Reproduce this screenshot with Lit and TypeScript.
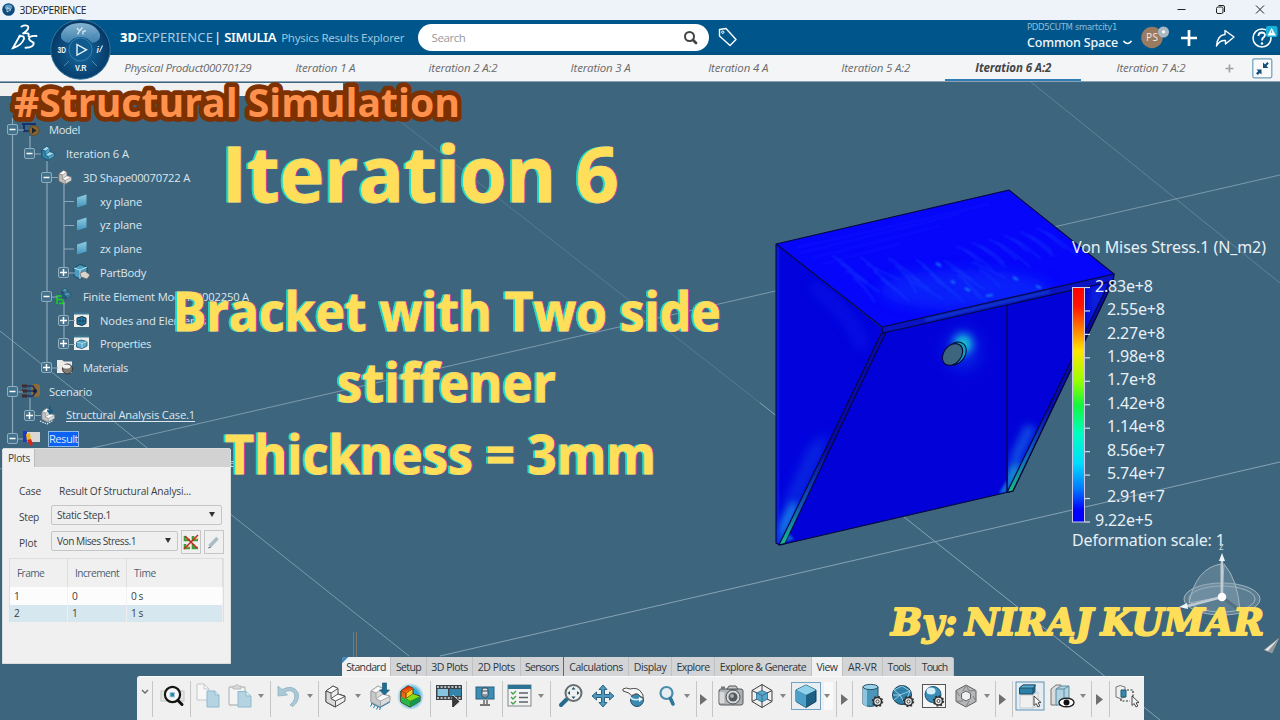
import { LitElement, html, svg, css, nothing } from "lit";
import { customElement, property } from "lit/decorators.js";
import { classMap } from "lit/directives/class-map.js";
import { styleMap } from "lit/directives/style-map.js";

/* Single-line label that tracks its letters so that it fills a given width. */
@customElement("fit-text")
class FitText extends LitElement {
  @property({ type: Number }) w = 0;
  @property() text = "";
  static styles = css`
    :host { display: inline-block; white-space: pre; flex: none; }
  `;
  render() {
    return html`<span>${this.text}</span>`;
  }
  updated() {
    const span = this.renderRoot.querySelector("span") as HTMLElement;
    span.style.letterSpacing = "0px";
    const natural = span.getBoundingClientRect().width;
    span.style.letterSpacing = (this.w - natural) / this.text.length + "px";
  }
}

const fit = (text: string, w: number) => html`<fit-text .text=${text} .w=${w}></fit-text>`;

const part = (a: string, b: string, c: string, line: string) => svg`
  <path d="M3 8 L10 3 L15 5.500 L15 11 L22 13 L22 18 L12 24 L3 19Z" fill=${b} stroke=${line} stroke-width="1"/>
  <path d="M3 8 L10 3 L15 5.500 L8 10Z" fill=${a} stroke=${line} stroke-width=".9"/>
  <path d="M8 10 L8 15.500 L12.500 18 L12.500 24 L3 19 L3 8Z" fill=${c} stroke=${line} stroke-width=".9"/>
  <path d="M8 15.500 L15 11 L22 13.500 L12.500 18Z" fill=${a} stroke=${line} stroke-width=".9"/>`;
const gear = (x: number, y: number) => svg`
  <circle cx=${x} cy=${y} r="4" fill="#e8e8e8" stroke="#333" stroke-width="1.600"/>
  <circle cx=${x} cy=${y} r="5" fill="none" stroke="#333" stroke-width="1.500" stroke-dasharray="1.900 2"/>
  <circle cx=${x} cy=${y} r="1.500" fill="#fff" stroke="#333" stroke-width=".9"/>`;
const pointer = (x: number, y: number) => svg`
  <path transform="translate(${x} ${y})" d="M0 0 L0 9.500 L2.200 7.500 L4 11 L5.800 10 L4.200 6.800 L7 6.500Z" fill="#f4f4f4" stroke="#333" stroke-width=".9"/>`;

const icons: Record<string, unknown> = {
  chevron: svg`<path d="M10 7 L13 10 L16 7" fill="none" stroke="#666" stroke-width="1.300"/>`,
  search: svg`<rect x="1" y="8" width="23" height="10" fill="#e4e4e4" stroke="#c4c4c4"/>
    <circle cx="12.500" cy="11.500" r="7.600" fill="#f8f8f8" stroke="#161616" stroke-width="2.200"/>
    <rect x="10" y="9.500" width="4.500" height="4.500" fill="#2f84ad" stroke="#a7cfe0"/><path d="M18 17.500 L22 21.500" stroke="#111" stroke-width="3" stroke-linecap="round"/>`,
  copy: svg`<path d="M2 1 H9 L14 6 V17 H2Z" fill="#f7f7f7" stroke="#c3c8cb"/><path d="M9 1 V6 H14" fill="none" stroke="#c3c8cb"/>
    <path d="M12 8 H20 L24 12 V24 H12Z" fill="#b5d4e2" stroke="#8fb9cc"/><path d="M20 8 V12 H24" fill="#dcecf3" stroke="#8fb9cc"/>`,
  paste: svg`<rect x="2" y="4" width="16" height="18" rx="1" fill="#f4f4f4" stroke="#b9bdbf" stroke-width="1.300"/><path d="M6 6 V3 H8 Q10 0 12 3 H14 V6Z" fill="#d8d8d8" stroke="#b9bdbf"/>
    <path d="M11 8.500 H19 L24 13 V24 H11Z" fill="#b5d4e2" stroke="#8fb9cc"/><path d="M19 8.500 V13 H24" fill="#dcecf3" stroke="#8fb9cc"/>`,
  undo: svg`<path d="M3 3 L3 13 L12.500 12 L9.500 9 Q17 5.500 19.500 11 Q21 17 15 22 L18 23.500 Q25.500 17 23 9.500 Q18 1 7 6.500Z" fill="#a9c9d8" stroke="#8fb2c2" stroke-width=".8"/>`,
  part: part("#ffffff", "#efefef", "#d9d9d9", "#4a4a4a"),
  load: svg`${part("#f8f8f8", "#dcdcdc", "#c8c8c8", "#a0a0a0")}
    <path d="M14.500 0 H18.500 V7 H21.500 L16.500 12 L11.500 7 H14.500Z" fill="#1e6e96" stroke="#0f4f70" stroke-width=".6"/>
    <path d="M3 20 L12 24.500 L22 19 M4 20.500 l-1.500 3 M7 22 l-1.500 3 M10 23.500 l-1.500 3 M12.500 24.500 l-1 2.500" stroke="#2d7ea6" stroke-width="1" fill="none"/>`,
  rainbow: svg`<defs><linearGradient id="rb" x1="0" y1="0" x2=".5" y2="1"><stop offset=".3" stop-color="#e82010"/><stop offset="1" stop-color="#ff8a00"/></linearGradient>
    <radialGradient id="rg"><stop offset=".6" stop-color="#2ea8d8"/><stop offset="1" stop-color="#2ea8d8" stop-opacity="0"/></radialGradient></defs>
    <ellipse cx="12.500" cy="13.500" rx="13.500" ry="13.500" fill="url(#rg)"/>${part("#e8402a", "#ffc81c", "#f0641c", "#3a3a17")}
    <path d="M3 8 L10 3 L15 5.500 L8 10Z" fill="url(#rb)"/><path d="M3 13.500 L8 16 L12.500 18 V24 L3 19Z" fill="#25b848"/><path d="M8 15.500 L15 11 L22 13.500 L12.500 18Z" fill="#86dc1c"/><path d="M12.500 18 L22 13.500 V18 L12.500 24Z" fill="#129a48"/>`,
  film: svg`<rect x="0" y="2" width="26" height="15" fill="#3c4348"/><path d="M1 4 H26 M1 15 H26" stroke="#e6e6e6" stroke-width="1.600" stroke-dasharray="2 1.600"/>
    <rect x="1.500" y="6" width="10.500" height="7" fill="#86c4e0"/><rect x="13.500" y="6" width="11.500" height="7" fill="#3484ac"/>
    <path d="M17 12 V25 L24 18.500Z" fill="#3a3a3a" stroke="#eee" stroke-width=".8"/><path d="M17 13 V24" stroke="#222" stroke-width="1.600"/>`,
  monitor: svg`<rect x="4" y="4" width="18" height="12" fill="#3a8db5" stroke="#2a607b"/><path d="M12 17 V21 M15 17 V21" stroke="#666" stroke-width="1.500"/><path d="M8 22 H18" stroke="#777" stroke-width="2"/>
    <rect x="10" y="5" width="6" height="9" rx="2" fill="#dfe5e8" stroke="#39464e"/><path d="M10 8 H16 M11 12 H15" stroke="#39464e"/>`,
  list: svg`<rect x="1" y="2" width="23" height="21" fill="#f3f3f3" stroke="#7a868c"/><rect x="1" y="2" width="23" height="4" fill="#2c7294"/>
    <path d="M4 9 l2 2 l3-3 M4 14 l2 2 l3-3 M4 19 l2 2 l3-3" stroke="#3fa34a" stroke-width="1.300" fill="none"/><path d="M12 10 H21 M12 14.500 H21 M12 19 H21" stroke="#59656b" stroke-width="1.600"/>`,
  zoomfit: svg`<path d="M9 16 L3 22" stroke="#246b8f" stroke-width="4" stroke-linecap="round"/><circle cx="15.500" cy="10" r="8" fill="#eef1f2" stroke="#656d71" stroke-width="2"/>
    <path d="M15.500 4 l2 2.500 h-4Z M15.500 16 l2-2.500 h-4Z M9.500 10 l2.500-2 v4Z M21.500 10 l-2.500-2 v4Z" fill="#2c5063"/>`,
  pan: svg`<path d="M13 2 L17 6.500 H14.500 V11.500 H19.500 V9 L24 13 L19.500 17 V14.500 H14.500 V19.500 H17 L13 24 L9 19.500 H11.500 V14.500 H6.500 V17 L2 13 L6.500 9 V11.500 H11.500 V6.500 H9Z" fill="#4a9ac2" stroke="#24556f" stroke-width=".9"/>`,
  rotate: svg`<circle cx="16" cy="17" r="6.500" fill="#3b8ab0" stroke="#1f4f69"/><path d="M2 6 Q5 4 9 6 Q17 4 20 9 Q23 12 22 15 L19 13 Q17 10 14 11 Q10 14 8 10 L2 8Z" fill="#f7f7f7" stroke="#4d4d4d"/><path d="M9 14 Q12 18 19 16" fill="none" stroke="#e3f0f6" stroke-width="1.500"/><path d="M18 14 L22 16 L18 19Z" fill="#fff"/>`,
  zoom: svg`<circle cx="13.500" cy="10" r="6" fill="#e5eef2" stroke="#4b8dab" stroke-width="2.200"/><path d="M17.500 15.500 L20 21" stroke="#2d7698" stroke-width="3.600" stroke-linecap="round"/>`,
  camera: svg`<rect x="1" y="6" width="24" height="16" rx="2" fill="#aeb2b4" stroke="#55595b"/><path d="M9 6 L11 3 H18 L20 6Z" fill="#c8cbcc" stroke="#55595b"/><rect x="3" y="3.500" width="4" height="2.500" fill="#777"/><rect x="1.500" y="9" width="5" height="11" fill="#d7d9da"/>
    <circle cx="15" cy="14" r="7" fill="#d8dadb" stroke="#4a4e50"/><circle cx="15" cy="14" r="4.500" fill="#53595c"/><circle cx="14" cy="13" r="2" fill="#aab2b6"/>`,
  wire: svg`<path d="M13 1.500 L23 7.500 V18.500 L13 24.500 L3 18.500 V7.500Z M13 1.500 V8 M3 7.500 L8 10 M23 7.500 L18 10 M3 18.500 L8 16 M23 18.500 L18 16 M13 24.500 V18" fill="none" stroke="#3c3c3c" stroke-width="1"/><path d="M13 7.500 L18.500 10 V16 L13 19 L7.500 16 V10Z" fill="#5ba5c8" stroke="#2b6d8f" stroke-width=".8"/><path d="M7.500 10 L13 12.500 L18.500 10 M13 12.500 V19" stroke="#2b6d8f" stroke-width=".9" fill="none"/>`,
  cube: svg`<path d="M13 2 L23 7 V18.500 L13 24.500 L3 18.500 V7Z" fill="#1d5f85" stroke="#123f5a" stroke-width="1"/><path d="M13 2 L23 7 L13 12 L3 7Z" fill="#8fd0ea"/><path d="M3 7 L13 12 V24.500 L3 18.500Z" fill="#4ba0c8"/>`,
  db: svg`<path d="M4 4 V21 Q11 26 19 21 V4Z" fill="#4b95ba" stroke="#22536d"/><path d="M4 4 V21 Q6 23 8 23 V6Z" fill="#8cc6de"/><ellipse cx="11.500" cy="4" rx="7.500" ry="2.600" fill="#9bd2e8" stroke="#22536d"/>${gear(18.5, 18.5)}`,
  globe: svg`<circle cx="12" cy="12" r="9.500" fill="#2f80a8" stroke="#173f55"/><path d="M4 7 L12 3 L20 8 L10 12Z M10 12 L4 17 M10 12 L15 21 M20 8 L15 21 M3 12 L10 12" stroke="#a5d5ea" stroke-width=".9" fill="none"/>${gear(18.5, 18.5)}`,
  sphere: svg`<rect x="1.500" y="1.500" width="23" height="23" fill="#f6f6f6" stroke="#555"/><circle cx="12" cy="11.500" r="8" fill="#3a8db8" stroke="#1c5475"/><ellipse cx="10" cy="8" rx="4.500" ry="3.500" fill="#d3eef9"/>${gear(17.5, 18)}`,
  hex: svg`<path d="M13 2 L23 7.500 V18.500 L13 24 L3 18.500 V7.500Z" fill="#b5b7b8" stroke="#606263"/><path d="M13 2 L16 8 L23 7.500 M20 13 L23 18.500 M16 18 L13 24 M10 18 L3 18.500 M6.500 13 L3 7.500 M10 8 L13 2" stroke="#808283" fill="none"/><path d="M13 8 L17.500 10.500 V15.500 L13 18 L8.500 15.500 V10.500Z" fill="#f0f0f0" stroke="#606263"/>`,
  select: svg`<rect x="-1" y="-1" width="28" height="28" fill="#e6edf2" stroke="#5b93b9" stroke-width="1"/><path d="M3 12 H16 V25 H3Z M16 12 L21 9 V22 L16 25" fill="#f0f0f0" stroke="#c6cacc"/><path d="M2.500 5 L6 2 H18.500 L16 5 V11 H2.500Z" fill="#2e7fa8" stroke="#174b66"/><path d="M2.500 5 L6 2 H18.500 L16 5Z" fill="#5aa8cc" stroke="#174b66" stroke-width=".8"/><path d="M16 5 L18.500 2 V9 L16 11Z" fill="#205f80"/>${pointer(17, 13)}`,
  hide: svg`<path d="M2 6 L7 2 H12 V18 L8 22 H2Z" fill="#d9dcdd" stroke="#777"/><path d="M7 6 L12 3 H20 V18 L15 22 H7Z" fill="#b2d3e1" stroke="#5d8ca1"/><path d="M7 6 H15 V22 M15 6 L20 3" fill="none" stroke="#5d8ca1"/><ellipse cx="17.500" cy="19.500" rx="7.500" ry="4.300" fill="#fff" stroke="#222" stroke-width="1.400"/><circle cx="17.500" cy="19.500" r="3" fill="#111"/>`,
  trap: svg`<path d="M2 4 Q6 1 11 4 V14 Q6 17 2 14Z" fill="#eee" stroke="#777"/><path d="M7 7 H12 V14 H7Z" fill="#3787ac" stroke="#205a75"/><path d="M13 7 H19 V17 M7 16 V18 H16" stroke="#333" stroke-dasharray="2 1.500" fill="none" stroke-width="1.200"/>${pointer(18, 13)}`,
};

/* kind, centre of the cell measured from the bar's left edge */
const tools: [string, number][] = [
  ["chevron", 8], ["sep", 15], ["search", 36], ["sep", 53], ["copy", 71], ["paste", 103], ["more", 124], ["sep", 133],
  ["undo", 151], ["more", 173], ["sep", 181.500], ["part", 199], ["more", 221], ["load", 244], ["rainbow", 274], ["sep", 293.500],
  ["film", 312], ["sep", 329.500], ["monitor", 348], ["sep", 365.500], ["list", 383], ["more", 404], ["sep", 413.500],
  ["zoomfit", 434], ["pan", 466], ["rotate", 497], ["zoom", 529], ["more", 550], ["sep", 559], ["play", 566], ["sep", 575.500],
  ["camera", 594], ["wire", 625], ["more", 646], ["cube", 669], ["more", 690], ["sep", 699], ["play", 707], ["sep", 715.500],
  ["db", 735], ["globe", 766], ["sphere", 797], ["hex", 828.500], ["more", 850], ["sep", 858], ["play", 865], ["sep", 875],
  ["select", 893], ["hide", 924.500], ["more", 946], ["sep", 954.500], ["play", 962], ["sep", 972], ["trap", 990],
];
const sizes: Record<string, number> = { sep: 1, more: 6, play: 7, cube: 30 };

@customElement("action-bar")
class ActionBar extends LitElement {
  static styles = css`
    :host { display: flex; flex-direction: column; width: 1007px; font: 10.500px "Open Sans", "Noto Sans", sans-serif; color: #2d3640; }
    .tabs { display: flex; align-self: flex-start; margin-left: 205px; height: 19px; background: #d3d4d5; border-radius: 3px 3px 0 0; overflow: hidden; }
    .tab { display: flex; align-items: center; justify-content: center; box-sizing: border-box; border-right: 1px solid #bfc1c3; flex: none; }
    .tab.on { background: #f1f1f1; }
    .tab.first { background: linear-gradient(135deg, #3b88bf 4px, #f1f1f1 5px); }
    .tab.dark { border-right-color: #476e88; }
    .bar { display: flex; align-items: center; height: 44px; box-sizing: border-box; padding-bottom: 6px; background: #f0f0f0; border-top: 1px solid #fbfbfb; border-radius: 3px 0 0 0; }
    .tool { flex: none; display: flex; align-items: center; justify-content: center; height: 28px; }
    .sep { align-self: stretch; height: auto; margin-top: 4px; margin-bottom: -3px; background: #c6c6c6; }
    .cube { box-sizing: border-box; border: 1px solid #72a3c4; background: #e9eef2; }
    .cube + .more { box-shadow: 2px 0 0 1px #f9f9f9; background: #f9f9f9; height: 26px; }
    svg { display: block; flex: none; overflow: visible; }
  `;
  render() {
    const tabs: [string, number, number][] = [
      ["Standard", 49, 39.500], ["Setup", 36, 25], ["3D Plots", 46, 36.500], ["2D Plots", 47.500, 37], ["Sensors", 43.500, 33.500],
      ["Calculations", 65, 53.500], ["Display", 43, 32.500], ["Explore", 43, 33], ["Explore & Generate", 97, 86.500], ["View", 31, 21],
      ["AR-VR", 40, 29], ["Tools", 33, 23], ["Touch", 38, 25.500],
    ];
    let end = 0;
    return html`
      <div class="tabs">
        ${tabs.map(([t, w, tw]) => html`<div class=${classMap({ tab: true, on: t === "View", first: t === "Standard", dark: t === "Sensors" })} style=${styleMap({ width: w + "px" })}>${fit(t, tw)}</div>`)}
      </div>
      <div class="bar">
        ${tools.map(([kind, c]) => {
          const w = sizes[kind] ?? 26;
          const gap = c - w / 2 - end;
          end = c + w / 2;
          return html`<div class="tool ${kind}" style=${styleMap({ width: w + "px", marginLeft: gap + "px" })}>${this.glyph(kind)}</div>`;
        })}
      </div>`;
  }
  glyph(kind: string) {
    if (kind === "sep") return nothing;
    if (kind === "more") return html`<svg width="6" height="4"><path d="M0 0 H6 L3 4Z" fill="#858585"/></svg>`;
    if (kind === "play") return html`<svg width="7" height="18"><path d="M0 7 L7 12.500 L0 18Z" fill="#6f6f6f"/></svg>`;
    return html`<svg width="26" height="26" viewBox="0 0 26 26">${icons[kind]}</svg>`;
  }
}

type Row = { t: string; w: number; l: number; box?: string; icon: string; cls?: string };
const rows: Row[] = [
  { t: "Model", w: 31, l: 0, box: "-", icon: "model" },
  { t: "Iteration 6 A", w: 63, l: 1, box: "-", icon: "blue" },
  { t: "3D Shape00070722 A", w: 107, l: 2, box: "-", icon: "white" },
  { t: "xy plane", w: 42, l: 3, icon: "plane" },
  { t: "yz plane", w: 42, l: 3, icon: "plane" },
  { t: "zx plane", w: 42, l: 3, icon: "plane" },
  { t: "PartBody", w: 46, l: 3, box: "+", icon: "body" },
  { t: "Finite Element Model00002250 A", w: 166, l: 2, box: "-", icon: "fem" },
  { t: "Nodes and Elements", w: 106, l: 3, box: "+", icon: "nodes" },
  { t: "Properties", w: 51, l: 3, box: "+", icon: "props" },
  { t: "Materials", w: 45, l: 2, box: "+", icon: "material" },
  { t: "Scenario", w: 43, l: 0, box: "-", icon: "scenario" },
  { t: "Structural Analysis Case.1", w: 129, l: 1, box: "+", icon: "case", cls: "under" },
  { t: "Result", w: 29, l: 0, box: "-", icon: "result", cls: "picked" },
];
const small = (a: string, b: string, c: string, k: string) => svg`<g transform="translate(1 -.5) scale(.66)">${part(a, b, c, k)}</g>`;
const treeIcons: Record<string, unknown> = {
  model: svg`<path d="M0 3 H14 M2 3 V10 H8" stroke="#17306e" stroke-width="2" fill="none"/><circle cx="12" cy="9.500" r="5" fill="#8a6426" stroke="#5d4c34"/><path d="M10 6.500 L14.500 9.500 L10 12.500Z" fill="#1c222c"/>`,
  blue: small("#a8dcf0", "#4fa6cb", "#3184ab", "#164a66"),
  white: small("#ffffff", "#dcdcdc", "#c2bdb8", "#77706a"),
  plane: svg`<defs><linearGradient id="pl" x1="0" y1="0" x2="0" y2="1"><stop offset="0" stop-color="#8fcbe2"/><stop offset="1" stop-color="#4196bd"/></linearGradient></defs><path d="M4 4.500 L13.500 1.500 V11.500 L4 14.500Z" fill="url(#pl)"/>`,
  body: svg`<path d="M1 4 L7 0.500 L14 3 V11 L7 15 L1 12Z" fill="#4b9cc0" stroke="#184a63"/><path d="M1 4 L7 6 L14 3 M7 6 V15" stroke="#b6e0f0" fill="none"/><path d="M7 9 L12 7 L17 11 L14 15 L8 13Z" fill="#d8d3cc" stroke="#6a625b" stroke-width=".7"/>`,
  fem: svg`<g transform="translate(4 -1) scale(.5)">${part("#5d9cb8", "#3b7f9f", "#245d79", "#164a66")}</g><path d="M1 16 V8 H6 M1 11.500 H6 M3 15.500 H7 V11.500" stroke="#12d41c" stroke-width="1.500" fill="none"/>`,
  nodes: svg`<rect x="1" y="1" width="15" height="14" fill="#f1efec"/><path d="M1 1.500 H16" stroke="#3d7894" stroke-width="2"/><path d="M4 6 L9 4.500 L13 6 V11.500 L9 13.500 L4 12Z" fill="#2779a2" stroke="#103b52"/><path d="M7 5 V13 M10 5 V13 M4 9 H13" stroke="#103b52" stroke-width=".7"/>`,
  props: svg`<rect x="1" y="1" width="15" height="14" fill="#f1efec"/><path d="M1 1.500 H16" stroke="#3d7894" stroke-width="2"/><path d="M3.500 7 L8 5 L14 6.500 V11 L9 13.500 L3.500 12Z" fill="#5aa8ca" stroke="#2e6e8c"/><path d="M3.500 7 L9 8.500 L14 6.500 M9 8.500 V13" stroke="#c4e6f3" stroke-width=".8" fill="none"/>`,
  material: svg`<path d="M1 1 H6 L8 2.500 H16 V14 H1Z" fill="#ece9e6"/><circle cx="11.500" cy="10" r="5" fill="#807a75" stroke="#3a3734"/><ellipse cx="10.500" cy="7.500" rx="4" ry="2" fill="#f5f3f1"/>`,
  scenario: svg`<rect x="9" y="1" width="9" height="13" rx="3" fill="#8a6c34"/><path d="M0 3 H5 M0 8 H5 M0 13 H5" stroke="#402c2c" stroke-width="3"/><path d="M5 3 H11 L14 8 M5 8 H14 M5 13 H11 L14 8" stroke="#1d3070" stroke-width="1.700" fill="none"/><circle cx="13" cy="8" r="2" fill="#15203f"/>`,
  case: svg`${small("#ffffff", "#dcdcdc", "#c4c4c4", "#7d8488")}<path d="M11 -1 V5 M8.500 3 L11 6.500 L13.500 3" stroke="#175b82" stroke-width="1.600" fill="none"/><path d="M1 14 L8 17 L14 13.500" stroke="#dfe8ec" stroke-dasharray="1.500 1" stroke-width="1.200" fill="none"/>`,
  result: svg`<path d="M3 2 H18 V12 H5Z" fill="#dad7d5"/><rect x="1" y="1" width="4" height="11" fill="#1938c4"/><path d="M4 4 L8 3 L9 10 L5 12Z" fill="#f0b41c"/><path d="M5 10 L9 9 L11 14 L8 16Z" fill="#d82817"/>`,
};

@customElement("model-tree")
class ModelTree extends LitElement {
  static styles = css`
    :host { display: block; position: relative; font: 11.200px "Open Sans", "Noto Sans", sans-serif; color: #dce7ee; }
    .lines { position: absolute; left: 0; top: 0; }
    .rows { display: grid; grid-auto-rows: 23.770px; padding-left: 7px; }
    .row { display: flex; align-items: center; }
    .pad { flex: none; }
    .box { width: 11px; height: 11px; flex: none; position: relative; }
    .icon { width: 18px; height: 17px; margin: 0 8px 0 4px; flex: none; overflow: visible; }
    .label { margin-left: 1px; line-height: 15px; }
    .under { border-bottom: 1px solid #dce7ee; line-height: 13px; }
    .picked { background: #0b62f4; outline: 1px solid #8fb9e6; line-height: 14px; }
  `;
  render() {
    return html`
      <svg class="lines" width="240" height="345" fill="none" stroke="#8ca9ba" stroke-width="1.200">
        <path d="M12.500 -8 V321 M30 18 V36 M47 43 V250 M64 66 V155 M64 184 V226 M30 280 V297"/>
        <path d="M64 83.500 H74 M64 107.500 H74 M64 131 H74 M12 12 H24 M30 36 H41 M47 59.500 H58 M64 155 H75 M47 179 H58 M64 202.500 H75 M64 226.500 H75 M47 250 H58 M12 274 H23 M30 297.500 H41 M12 321 H23"/>
      </svg>
      <div class="rows">
        ${rows.map((r) => html`
          <div class="row">
            <span class="pad" style=${styleMap({ width: r.l * 17 + "px" })}></span>
            <svg class="box" viewBox="0 0 11 11">${r.box ? svg`<rect x=".5" y=".5" width="10" height="10" rx="1.500" fill="#44718c" stroke="#90adbd"/><path d=${r.box === "+" ? "M2 5.500 H9 M5.500 2 V9" : "M2.500 5.500 H8.500"} stroke="#fff" stroke-width="1.500"/>` : nothing}</svg>
            <svg class="icon" viewBox="0 0 18 17">${treeIcons[r.icon]}</svg>
            <span class="label ${r.cls ?? ""}">${fit(r.t, r.w)}</span>
          </div>`)}
      </div>`;
  }
}

@customElement("plots-panel")
class PlotsPanel extends LitElement {
  static styles = css`
    :host { display: flex; flex-direction: column; width: 228.500px; height: 216px; background: #f0f0f0; box-sizing: border-box; border: 1px solid #dadcde; font: 10.200px "Open Sans", "Noto Sans", sans-serif; color: #3b3f44; border-radius: 2px 2px 0 0; }
    .head { display: flex; height: 18px; background: #d2d2d2; }
    .tab { width: 32px; background: #f0f0f0; padding-left: 5px; box-sizing: border-box; line-height: 18px; border-right: 1px solid #bbb; }
    .form { display: grid; grid-template-columns: 32px 1fr; padding: 12px 8px 0 16px; grid-template-rows: 24.500px 25.500px 26px; align-items: center; }
    .value { padding-left: 8px; }
    .combo { display: flex; align-items: center; justify-content: space-between; box-sizing: border-box; border: 1px solid #c3c5c6; border-radius: 2px; background: #efefef; height: 20px; padding: 0 6px 0 5px; }
    .wide { width: 171px; margin-top: -3px; }
    .narrow { width: 127px; margin-top: -3px; }
    .plot { display: flex; align-items: center; gap: 3px; }
    .btn { width: 20px; height: 24px; box-sizing: border-box; border: 1px solid #c6c6c6; display: flex; align-items: center; justify-content: center; }
    .low { padding-top: 2px; }
    .grid { margin: 3px 6px 0 6px; display: grid; grid-template-columns: 58px 59px 1fr; border: 1px solid #dcdedf; border-bottom: none; }
    .grid span { padding-left: 7px; border-right: 1px solid #dcdedf; display: flex; align-items: center; }
    .h { height: 28px; color: #51606f; }
    .grid .a { background: #fcfcfc; height: 17.500px; padding-left: 4px; border-right: 1px solid #f2f2f2; }
    .grid .b { background: #d6e7f0; height: 17px; padding-left: 4px; border-right: 1px solid #eee; }
    svg { display: block; }
  `;
  render() {
    const arrow = html`<svg width="6" height="5"><path d="M0 0 H6 L3 5Z" fill="#333"/></svg>`;
    return html`
      <div class="head"><div class="tab">${fit("Plots", 22)}</div></div>
      <div class="form">
        <span>${fit("Case", 22)}</span><span class="value">${fit("Result Of Structural Analysi...", 132)}</span>
        <span class="low">${fit("Step", 20)}</span><div class="combo wide">${fit("Static Step.1", 54)}${arrow}</div>
        <span class="low">${fit("Plot", 18)}</span>
        <div class="plot">
          <div class="combo narrow">${fit("Von Mises Stress.1", 79)}${arrow}</div>
          <div class="btn"><svg width="16" height="16"><path d="M2 2 V6 H7 M10 2 V6 H15 M2 10 V14 H7 M10 10 V14 H15" stroke="#3c9a3a" stroke-width="2.600" fill="none"/><path d="M2 5 H6 M10 5 H14 M2 13 H6" stroke="#d8a620" stroke-width="1.200"/><path d="M1 15 L15 1 M2 2 L14 14" stroke="#c0281c" stroke-width="1.500"/></svg></div>
          <div class="btn"><svg width="14" height="14"><path d="M2.500 11.500 L10.500 3" stroke="#a9bdc8" stroke-width="3.500"/><path d="M1 13 L4 12" stroke="#777"/></svg></div>
        </div>
      </div>
      <div class="grid">
        <span class="h">${fit("Frame", 27)}</span><span class="h">${fit("Increment", 44)}</span><span class="h">${fit("Time", 22)}</span>
        <span class="a">1</span><span class="a">0</span><span class="a">${fit("0 s", 12)}</span>
        <span class="b">2</span><span class="b">1</span><span class="b">${fit("1 s", 12)}</span>
      </div>`;
  }
}

@customElement("result-scene")
class ResultScene extends LitElement {
  static styles = css`
    :host { display: block; }
    svg { display: block; }
    .legend { font: 16px "Noto Sans", "Open Sans", sans-serif; font-weight: 400; fill: #e8f0f5; }
    .edge { stroke: #05083c; stroke-width: 1.100; stroke-linejoin: round; }
    .axis { font: 10px "Noto Sans", sans-serif; fill: #c7d4dc; }
  `;
  render() {
    const labels = ["2.83e+8", "2.55e+8", "2.27e+8", "1.98e+8", "1.7e+8", "1.42e+8", "1.14e+8", "8.56e+7", "5.74e+7", "2.91e+7", "9.22e+5"];
    const ripples = Array.from({ length: 22 }, (_, i) => `M${832 + i * 7} ${256 + (i % 4) * 7 + i * 0.3} q9 4 ${22 + (i % 3) * 6} ${16 + (i % 5) * 3}`).join(" ");
    const ripples2 = Array.from({ length: 13 }, (_, i) => `M${956 + i * 8} ${246 - i * 1.8 + (i % 2) * 5} q12 5 ${24 + (i % 3) * 5} ${17 + (i % 3) * 4}`).join(" ");
    return html`
      <svg width="1280" height="638" viewBox="0 82 1280 638">
        <defs>
          <linearGradient id="scale" x1="0" y1="0" x2="0" y2="1">
            <stop offset="0" stop-color="#ff0000"/><stop offset=".08" stop-color="#ff1400"/><stop offset=".2" stop-color="#ff9600"/><stop offset=".27" stop-color="#ffe600"/><stop offset=".4" stop-color="#96ff00"/><stop offset=".5" stop-color="#14f53c"/>
            <stop offset=".62" stop-color="#00ffbe"/><stop offset=".75" stop-color="#00dcff"/><stop offset=".86" stop-color="#0078ff"/><stop offset=".95" stop-color="#0000ff"/>
          </linearGradient>
          <linearGradient id="strip" gradientUnits="userSpaceOnUse" x1="0" y1="332" x2="0" y2="545"><stop offset="0" stop-color="#0a0ab0"/><stop offset=".55" stop-color="#0808a8"/><stop offset=".82" stop-color="#1058b8"/><stop offset="1" stop-color="#14c088"/></linearGradient>
          <linearGradient id="strip2" gradientUnits="userSpaceOnUse" x1="0" y1="282" x2="0" y2="492"><stop offset="0" stop-color="#0a0aa8"/><stop offset=".6" stop-color="#0808b0"/><stop offset=".84" stop-color="#1068c0"/><stop offset="1" stop-color="#18c078"/></linearGradient>
          <radialGradient id="hot"><stop offset="0" stop-color="#18d0c0"/><stop offset=".35" stop-color="#14a0e0" stop-opacity=".85"/><stop offset="1" stop-color="#0000e0" stop-opacity="0"/></radialGradient>
          <radialGradient id="warm"><stop offset="0" stop-color="#1058f0" stop-opacity=".8"/><stop offset="1" stop-color="#0000e0" stop-opacity="0"/></radialGradient>
          <clipPath id="topClip"><path d="M776 244 L1009 190 L1114 274 L882 327Z"/></clipPath>
          <clipPath id="leftClip"><path d="M776 244 L882 328 V333 L779 545 L776 543Z"/></clipPath>
          <clipPath id="backClip"><path d="M1007 305 L1109 283 L1008 492Z"/></clipPath>
          <filter id="soft" x="-50%" y="-50%" width="200%" height="200%"><feGaussianBlur stdDeviation="1.300"/></filter>
          <filter id="mist" x="-100%" y="-50%" width="300%" height="200%"><feGaussianBlur stdDeviation="4"/></filter>
          <filter id="haze" x="-100%" y="-50%" width="300%" height="200%"><feGaussianBlur stdDeviation="7"/></filter>
        </defs>
        <rect x="0" y="82" width="1280" height="638" fill="#3d657e"/>
        <rect x="0" y="83" width="343" height="13" fill="#f1f0f1"/>
        <g stroke="#86a3b4" stroke-width="1" fill="none">
          <path d="M1031 82 L1280 283" opacity=".5"/>
          <path d="M0 331 L409 656" opacity=".85"/>
          <path d="M0 469 L97 447 L1280 175" opacity=".85"/>
          <path d="M440 656 L1280 462"/>
          <path d="M350 82 L760 402.800" opacity=".35"/>
          <path d="M760 402.800 L1160 720"/>
        </g>
        <path d="M353.500 632 V657 M356.500 632 V657" stroke="#7d7a74" stroke-width="1"/>

        <path d="M776 244 L882 328 L1114 274 L1113 282 L1013 491 L780 545 L776 543Z" fill="#0202d8"/>
        <g clip-path="url(#leftClip)">
          <path d="M776 244 V545 H779 L882 333Z" fill="#0202dd"/>
          <path d="M776 552 L830 432 L812 446 L788 500Z" fill="#1668e8" opacity=".55" filter="url(#haze)"/>
          <path d="M777 552 L798 504 L792 502 L780 526Z" fill="#1cb0e8" opacity=".9" filter="url(#mist)"/>
          <path d="M777 244 V545" stroke="#1432f4" stroke-width="5" opacity=".4"/>
          <path d="M812 285 Q850 310 864 350" stroke="#1230f0" stroke-width="10" fill="none" opacity=".4" filter="url(#haze)"/>
        </g>
        <g clip-path="url(#topClip)">
          <rect x="770" y="185" width="350" height="150" fill="#0606fa"/>
          <ellipse cx="965" cy="290" rx="85" ry="20" fill="#0a38fa" opacity=".55" filter="url(#haze)"/>
          <path d="M795 248 L990 204 M800 253 L960 214 M812 258 L940 226 M822 264 L900 244" stroke="#2040ff" opacity=".35" filter="url(#soft)"/>
          <path d=${ripples} fill="none" stroke="#1a48ff" stroke-width="1.700" opacity=".45" filter="url(#soft)"/>
          <path d=${ripples2} fill="none" stroke="#1a48ff" stroke-width="1.700" opacity=".38" filter="url(#soft)"/>
          <path d="M951 281 l4 2 M965 288 l5 3 M1013 277 l5 3 M986 296 l7 -1 M936 263 l5 3 M1036 286 l5 2" stroke="#22a4ff" stroke-width="2.200" opacity=".7" filter="url(#soft)"/>
        </g>
        <path d="M882 327 L1114 274 L1113 281 L883 333Z" fill="#0a14c4" class="edge"/>
        <path d="M925 320 L1050 291.500" stroke="#1450d0" stroke-width="2" opacity=".8" filter="url(#soft)"/>
        <g clip-path="url(#backClip)">
          <path d="M1003 500 L1036 428 L1026 424 L1012 452Z" fill="#1470e8" opacity=".7" filter="url(#mist)"/>
          <path d="M1005 500 L1021 464 L1014 466 L1007 480Z" fill="#24d0c8" filter="url(#mist)"/>
          <path d="M1090 284 H1112 L1086 335Z" fill="#1240e0" opacity=".5" filter="url(#mist)"/>
        </g>
        <path d="M999 493 L1007 480 V493Z" fill="#18a8d8" opacity=".6" filter="url(#soft)"/>
        <path d="M886 332 L881 334 L779 545 L785 543.500Z" fill="url(#strip)" class="edge"/>
        <path d="M1114 280 L1109 283 L1007 492.500 L1013 491Z" fill="url(#strip2)" class="edge"/>
        <path d="M1007 305 V492" class="edge"/>
        <path d="M786 542 L794 539 L789 534Z" fill="#18a0d0" opacity=".6" filter="url(#soft)"/>
        <ellipse cx="963" cy="350" rx="32" ry="36" fill="url(#warm)"/>
        <ellipse cx="963" cy="344" rx="19" ry="20" fill="url(#hot)"/>
        <ellipse cx="955.500" cy="353.500" rx="12.500" ry="9.500" transform="rotate(-52 955.500 353.500)" fill="#14a0b8" class="edge"/>
        <ellipse cx="952.500" cy="354.500" rx="12" ry="8.800" transform="rotate(-52 952.500 354.500)" fill="#3d657e" class="edge"/>
        <path d="M776 244 L1009 190 L1114 274 L1113 282 L1013 491 L780 545 L776 543Z M776 244 L882 327" fill="none" class="edge"/>

        <rect x="1072.500" y="287.500" width="12" height="234.500" fill="url(#scale)" stroke="#cfc9ea"/>
        ${labels.map((_, i) => svg`<path d="M1085 ${287.5 + i * 23.45} h5" stroke="#d5dfe6" stroke-width="1.200"/>`)}
        <g class="legend">
          <text x="1072" y="252.500" textLength="194">Von Mises Stress.1 (N_m2)</text>
          ${labels.map((t, i) => svg`<text x=${i % 10 ? 1107 : 1095} y=${291.7 + i * 23.4} textLength=${t.length === 6 ? 49 : 58}>${t}</text>`)}
          <text x="1072" y="545.500" textLength="153">Deformation scale: 1</text>
        </g>

        <g fill="#8da4b3" fill-opacity=".4" stroke="#a3b5c0" stroke-width="1">
          <ellipse cx="1222" cy="599" rx="38" ry="16"/><ellipse cx="1222" cy="599" rx="33" ry="13" fill="none"/>
          <path d="M1221 564 Q1196 568 1189 603 L1221 597Z M1224 564 Q1238 580 1240 611 L1222 597Z"/>
        </g>
        <path d="M1222 597 V560 M1222 597 L1184 607" stroke="#c0ccd4" stroke-width="2.500"/>
        <path d="M1222 597 L1242 612" stroke="#566f80" stroke-width="3"/>
        <path d="M1222 553 L1225 561 H1219Z M1179 607 L1187 603 L1188 609Z" fill="#f2f5f7"/>
        <circle cx="1222" cy="597" r="4.300" fill="#fff"/>
        <text class="axis" x="1219" y="549.500">z</text><text class="axis" x="1169" y="613">x</text>
        <path d="M1279 638 L1264 650 L1272 653Z" fill="#e6e6e6" stroke="#6d7880" stroke-width=".6"/><path d="M1279 638 L1268 651 L1272 653Z" fill="#8e979c"/>
      </svg>`;
  }
}

@customElement("caption-layer")
class CaptionLayer extends LitElement {
  static styles = css`
    :host { display: block; pointer-events: none; }
    svg { display: block; overflow: visible; }
    text { font-family: "Open Sans", "Noto Sans", sans-serif; font-weight: 700; }
    .tag { font-size: 39.500px; fill: #ff914d; stroke: #7d3000; stroke-width: 9.500px; stroke-linejoin: round; paint-order: stroke; }
    .gold { fill: #ffde59; stroke: #ffde59; stroke-width: .8px; filter: drop-shadow(-1.100px 0 0 #1fdcc8) drop-shadow(1.300px 0 0 #e0429a); }
    .big { font-size: 77px; }
    .mid { font-size: 53px; }
    .by { font-family: "DejaVu Serif", serif; font-style: italic; font-size: 36.500px; word-spacing: -5px; fill: #ffde59; stroke: #ffde59; stroke-width: 2px; stroke-linejoin: round; }
  `;
  render() {
    return html`
      <svg width="1280" height="640" viewBox="0 80 1280 640">
        <text class="tag" x="14" y="117" textLength="446" lengthAdjust="spacingAndGlyphs">#Structural Simulation</text>
        <g class="gold">
          <text class="big" x="222" y="202" textLength="397" lengthAdjust="spacingAndGlyphs">Iteration 6</text>
          <text class="mid" x="173" y="330.500" textLength="548" lengthAdjust="spacingAndGlyphs">Bracket with Two side</text>
          <text class="mid" x="337" y="402" textLength="219" lengthAdjust="spacingAndGlyphs">stiffener</text>
          <text class="mid" x="225" y="474" textLength="431" lengthAdjust="spacingAndGlyphs">Thickness = 3mm</text>
        </g>
        <text class="by" x="891" y="634.500" textLength="373" lengthAdjust="spacingAndGlyphs">By: NIRAJ KUMAR</text>
      </svg>`;
  }
}

@customElement("app-root")
class AppRoot extends LitElement {
  static styles = css`
    :host { display: flex; flex-direction: column; width: 1280px; height: 720px; overflow: hidden; position: relative; font-family: "Open Sans", "Noto Sans", sans-serif; }
    svg { display: block; flex: none; }
    .title { display: flex; align-items: center; height: 19.500px; background: #eef3fa; font-size: 10.300px; color: #222; padding: 0 14px 0 1.500px; flex: none; box-sizing: border-box; }
    .title .name { margin-left: 5px; flex: 1; }
    .win { display: flex; gap: 28px; }
    .head { display: flex; align-items: center; height: 35.500px; flex: none; background: linear-gradient(#00568a 90%, #004d7c); color: #fff; box-sizing: border-box; }
    .logo { margin-left: 11px; }
    .brand { display: flex; align-items: baseline; margin-left: 81px; width: 297.500px; font-family: "Noto Sans", sans-serif; font-size: 13px; color: #a9cbe0; }
    .brand b { color: #fff; font-weight: 800; }
    .brand .semi { color: #fff; font-weight: 600; margin-left: 3px; }
    .brand .bar { color: #fff; margin-left: 1px; }
    .brand .app { margin-left: 5px; font-size: 11.500px; color: #9cc4dc; }
    .find { display: flex; align-items: center; justify-content: space-between; width: 291px; height: 27px; border-radius: 14px; background: #fff; color: #9a9a9a; font-size: 11.500px; padding: 0 11px 0 14px; box-sizing: border-box; }
    .labelIcon { margin-left: 9px; }
    .space { margin-left: auto; display: flex; flex-direction: column; width: 107px; margin-right: 7px; font-family: "Noto Sans", sans-serif; }
    .tenant { font: 8.500px "DejaVu Sans", sans-serif; color: #8fb9d4; line-height: 12px; }
    .current { display: flex; align-items: center; gap: 5px; font-size: 12.500px; font-weight: 500; line-height: 20px; color: #f2f8fb; }
    .tabs { display: flex; height: 27px; flex: none; background: #f4f5f7; padding-left: 119px; font: italic 11.500px "Open Sans", sans-serif; color: #6a6a6a; border-bottom: 1px solid #8ba0b1; box-sizing: border-box; align-items: stretch; }
    .tab { width: 137.600px; display: flex; align-items: center; justify-content: center; flex: none; padding-bottom: 1px; box-sizing: border-box; }
    .tab.on { font-weight: 700; color: #454545; background: linear-gradient(#2f7fb6, #2f7fb6) center bottom / 136px 2.500px no-repeat; }
    .plus { width: 19px; margin-right: 13px; display: flex; align-items: center; justify-content: center; }
    .shrink { align-self: center; }
    .stage { flex: 1; position: relative; }
    .stage > * { position: absolute; }
    .scene { left: 0; top: 0; }
    .captions { left: 0; top: -2px; }
    .tree { left: 0; top: 36px; }
    .stray { left: 229px; top: 373px; font-size: 11.500px; color: #dce7ee; }
    .panel { left: 2px; top: 366px; }
    .bar { left: 137px; bottom: 0; }
    .compass { position: absolute; left: 48px; top: 18px; }
  `;
  render() {
    const tabs: [string, number][] = [["Physical Product00070129", 127], ["Iteration 1 A", 60], ["iteration 2 A:2", 69], ["Iteration 3 A", 60], ["Iteration 4 A", 60], ["Iteration 5 A:2", 69], ["Iteration 6 A:2", 76], ["Iteration 7 A:2", 69]];
    return html`
      <div class="title">
        <svg width="13" height="13"><circle cx="6.500" cy="6.500" r="6.300" fill="#0f4b7c"/><ellipse cx="6.500" cy="4" rx="3.800" ry="2.600" fill="#5d9ac4"/><path d="M5 4.500 L9 6.800 L5 9Z" fill="none" stroke="#cfe3f0" stroke-width=".8"/></svg>
        <span class="name">${fit("3DEXPERIENCE", 66.5)}</span>
        <div class="win">
          <svg width="11" height="11"><path d="M1.500 5.500 H9.500" stroke="#222"/></svg>
          <svg width="11" height="11"><rect x="1.500" y="3" width="6.500" height="6.500" rx="1.500" fill="none" stroke="#222"/><path d="M3.500 1.500 H8 Q9.500 1.500 9.500 3 V8" fill="none" stroke="#222"/></svg>
          <svg width="12" height="11"><path d="M2 1.500 L10 9.500 M10 1.500 L2 9.500" stroke="#222"/></svg>
        </div>
      </div>
      <div class="head">
        <svg class="logo" width="28" height="28" viewBox="0 0 28 28" fill="none" stroke="#fff" stroke-width="1.900" stroke-linecap="round">
          <path d="M10.500 3.500 Q14 1.600 16.800 3 Q18.800 5.500 13.500 9.500 L11.500 10.500 Q19 9 17.500 13 M9 12.500 Q5 19.500 2 25 Q10.500 22.500 13 16 Q13.500 12 8 13.500 M25.500 13 Q19 12.300 18 15.200 Q18 17.500 22.500 19.500 Q23.500 24.500 14.500 24.800"/>
        </svg>
        <div class="brand"><b>${fit("3D", 17)}</b>${fit("EXPERIENCE", 76)}<span class="bar">|</span><span class="semi">${fit("SIMULIA", 52)}</span><span class="app">${fit("Physics Results Explorer", 123)}</span></div>
        <div class="find">${fit("Search", 34)}
          <svg width="15" height="15"><circle cx="6.500" cy="6.500" r="4.500" fill="none" stroke="#444" stroke-width="2"/><path d="M10 10 L13 13" stroke="#444" stroke-width="2.800" stroke-linecap="round"/></svg>
        </div>
        <svg class="labelIcon" width="20" height="20"><path d="M1.500 2.500 L8 1.500 L18 12.500 L12 18.500 L1.500 9Z" fill="none" stroke="#fff" stroke-width="1.400" stroke-linejoin="round"/><circle cx="4.800" cy="5.200" r="1.200" fill="none" stroke="#fff"/></svg>
        <div class="space">
          <span class="tenant">${fit("PDD5CUTM smartcity1", 90)}</span>
          <span class="current">${fit("Common Space", 91)}<svg width="9" height="6"><path d="M1 1.500 Q4.500 5.500 8 1.500" fill="none" stroke="#fff" stroke-width="1.700" stroke-linecap="round"/></svg></span>
        </div>
        <svg width="139" height="35" viewBox="1141 20 139 35">
          <circle cx="1152" cy="37.500" r="10.700" fill="#9a7b62"/>
          <text x="1146" y="41" font-size="10" fill="#f1e9e2" textLength="12">PS</text>
          <circle cx="1163.500" cy="32" r="5.500" fill="#a9b9c4"/><circle cx="1163.500" cy="31.800" r="1.600" fill="#fff"/>
          <path d="M1181 38 H1197 M1189 30 V46" stroke="#fff" stroke-width="2.700"/>
          <path d="M1225 30.500 L1234 37 L1225.500 44 V40.500 Q1219.500 40 1216.500 46 Q1217.500 35 1225 34.500Z" fill="none" stroke="#fff" stroke-width="1.400" stroke-linejoin="round"/>
          <circle cx="1262" cy="38" r="9" fill="none" stroke="#fff" stroke-width="1.500"/>
          <path d="M1258.500 36 Q1258.500 32.500 1262 32.500 Q1266 33 1264.500 36.500 Q1262 38 1262 40.500" fill="none" stroke="#fff" stroke-width="1.800"/><circle cx="1262" cy="43.500" r="1.200" fill="#fff"/>
          <rect x="1266" y="26" width="11.500" height="11" rx="2" fill="#18b1d8"/><path d="M1271.700 28 L1276 35.500 H1267.500Z" fill="#fff"/><path d="M1271.700 30.500 V33" stroke="#18b1d8"/>
        </svg>
      </div>
      <div class="tabs">
        ${tabs.map(([t, w]) => html`<div class=${classMap({ tab: true, on: t.includes("6") })}>${fit(t, w)}</div>`)}
        <div class="plus"><svg width="9" height="9"><path d="M4.500 .5 V8.500 M.5 4.500 H8.500" stroke="#a0a0a0" stroke-width="1.600"/></svg></div>
        <svg class="shrink" width="21" height="21" viewBox="0 0 21 21" fill="#134f78"><rect x=".8" y=".8" width="19" height="19" rx="1.500" fill="#f8fafb" stroke="#6d9dbc" stroke-width="1.200"/><path d="M11 4.500 V10 H16.500 L14.500 8 L16.800 5.500 L15.300 4 L13 6.500Z M4.500 11.500 H9.500 V16.500 L7.800 15 L5.800 17 L4 15.300 L6.200 13.200Z"/></svg>
      </div>
      <div class="stage">
        <result-scene class="scene"></result-scene>
        <model-tree class="tree"></model-tree>
        <span class="stray">e</span>
        <plots-panel class="panel"></plots-panel>
        <action-bar class="bar"></action-bar>
        <caption-layer class="captions"></caption-layer>
      </div>
      <svg class="compass" width="64" height="64" viewBox="48 18 64 64">
        <defs><radialGradient id="ball" cx=".5" cy=".55"><stop offset="0" stop-color="#1b6ca0"/><stop offset=".6" stop-color="#0c4d80"/><stop offset="1" stop-color="#073a66"/></radialGradient><linearGradient id="cap" x1="0" y1="0" x2="0" y2="1"><stop offset="0" stop-color="#86b3d0"/><stop offset="1" stop-color="#3b7fad"/></linearGradient></defs>
        <circle cx="80.500" cy="49.500" r="29.700" fill="url(#ball)" stroke="#2f739f" stroke-width="1"/>
        <path d="M61 34 Q66 23 80.500 23 Q95 23 100 34 Q101 42 92 43 Q88 37 80.500 37 Q73 37 69 43 Q60 42 61 34Z" fill="url(#cap)"/>
        <circle cx="80.500" cy="49.500" r="11.500" fill="#0f5a8e" stroke="#3f8ab6" stroke-width=".8"/>
        <path d="M69 38 L64 33 M92 38 L97 33 M69 61 L64 66 M92 61 L97 66" stroke="#4e8cb2" stroke-width="1"/>
        <path d="M77 44.500 L86.500 49.800 L77 55Z" fill="none" stroke="#e8f1f6" stroke-width="1.400"/>
        <path d="M77 28 L79.500 31 L82.500 27.500 M79.500 31 L77.500 34.500 M83 34.500 V31 M83 32 Q84 30.500 86 31" stroke="#dce9f1" stroke-width="1.300" fill="none"/>
        <g fill="#eef4f8" font-size="8.500" font-weight="700" font-family="Liberation Sans, sans-serif"><text x="57.500" y="52.500" textLength="8.500" lengthAdjust="spacingAndGlyphs">3D</text><text x="96.500" y="53" font-style="italic">i</text><text x="75" y="70.500" textLength="11.500" lengthAdjust="spacingAndGlyphs">V.R</text></g>
        <path d="M99.500 52 L102.500 45.500" stroke="#dce9f1" stroke-width="1.100"/>
      </svg>`;
  }
}
